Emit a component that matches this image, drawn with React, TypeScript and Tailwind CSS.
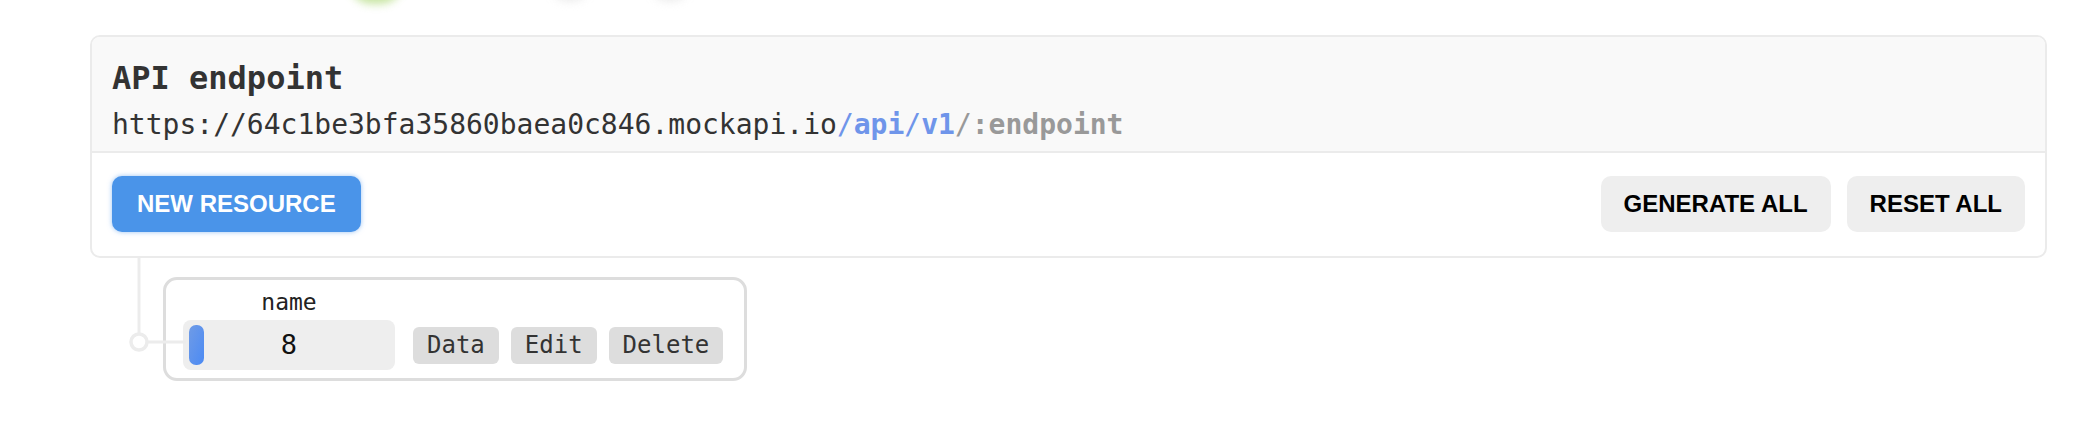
import React from "react";

const mono = { fontFamily: '"DejaVu Sans Mono", "Liberation Mono", monospace' };
const sans = { fontFamily: '"Liberation Sans", Arial, sans-serif' };

export default function App() {
  return (
    <div className="relative w-full h-[446px] bg-white overflow-hidden">
      {/* faint decorations cut off at top */}
      <div className="absolute left-[348px] top-[-44px] w-[56px] h-[48px] rounded-full bg-[#b9de8a] blur-[4px] opacity-80" />
      <div className="absolute left-[548px] top-[-46px] w-[44px] h-[48px] rounded-full bg-[#e4e4e4] blur-[4px] opacity-70" />
      <div className="absolute left-[648px] top-[-46px] w-[44px] h-[48px] rounded-full bg-[#e4e4e4] blur-[4px] opacity-70" />

      <div className="pt-[35px] pl-[90px]">
        <div className="w-[1957px] border-2 border-[#ebebeb] rounded-[10px] overflow-hidden bg-white">
          <div className="bg-[#f9f9f9] px-[20px] pt-[22px] pb-[9px] border-b-2 border-[#ebebeb]">
            <div className="text-[32px] leading-[38px] font-bold text-[#333]" style={mono}>
              API endpoint
            </div>
            <div className="mt-[11px] text-[28px] leading-[34px] text-[#333]" style={mono}>
              <span>https://64c1be3bfa35860baea0c846.mockapi.io</span>
              <span className="text-[#6f95ea]">/</span>
              <span className="text-[#6f95ea] font-bold">api</span>
              <span className="text-[#6f95ea]">/</span>
              <span className="text-[#6f95ea] font-bold">v1</span>
              <span className="text-[#999]">/</span>
              <span className="text-[#999] font-bold">:endpoint</span>
            </div>
          </div>
          <div className="flex items-center justify-between px-[20px] pt-[23px] pb-[24px]">
            <button
              className="h-[56px] px-[25px] rounded-[10px] bg-[#4a94e9] text-white text-[24px] font-bold shadow-[0_0_5px_rgba(74,148,233,0.55)]"
              style={sans}
            >
              NEW RESOURCE
            </button>
            <div className="flex gap-[16px]">
              <button className="h-[56px] px-[23px] rounded-[10px] bg-[#eeeeee] text-black text-[24px] font-bold" style={sans}>
                GENERATE ALL
              </button>
              <button className="h-[56px] px-[23px] rounded-[10px] bg-[#eeeeee] text-black text-[24px] font-bold" style={sans}>
                RESET ALL
              </button>
            </div>
          </div>
        </div>
      </div>

      {/* resource tree */}
      <div className="relative">
        <svg className="absolute left-0 top-0" width="200" height="130" viewBox="0 0 200 130">
          <line x1="139" y1="0" x2="139" y2="75" stroke="#ececec" strokeWidth="3" />
          <circle cx="139" cy="84" r="8" fill="white" stroke="#ececec" strokeWidth="3.5" />
        </svg>
        <div className="pl-[163px] pt-[19px]">
          <div className="relative inline-flex items-end border-[3px] border-[#dddddd] rounded-[14px] pl-[17px] pr-[21px] pt-[8px] pb-[8px] bg-white">
            <div className="flex flex-col items-center">
              <div className="text-[23px] leading-[28px] text-[#222]" style={mono}>name</div>
              <div className="relative mt-[4px] w-[212px] h-[50px] rounded-[8px] bg-[#eeeeee] flex items-center justify-center">
                <div className="absolute left-[6px] top-[5px] w-[15px] h-[40px] rounded-[7px] bg-gradient-to-br from-[#6f9be6] to-[#4b8af4]" />
                <span className="text-[27px] text-[#111]" style={mono}>8</span>
              </div>
            </div>
            <div className="flex items-center gap-[12px] ml-[18px] mb-[6px]">
              <span className="h-[37px] px-[14px] rounded-[6px] bg-[#dddddd] text-[24px] leading-[37px] text-[#333]" style={mono}>Data</span>
              <span className="h-[37px] px-[14px] rounded-[6px] bg-[#dddddd] text-[24px] leading-[37px] text-[#333]" style={mono}>Edit</span>
              <span className="h-[37px] px-[14px] rounded-[6px] bg-[#dddddd] text-[24px] leading-[37px] text-[#333]" style={mono}>Delete</span>
            </div>
          </div>
        </div>
        <svg className="absolute left-0 top-0 pointer-events-none" width="200" height="130" viewBox="0 0 200 130">
          <line x1="147" y1="84" x2="186" y2="84" stroke="#ececec" strokeWidth="3" />
        </svg>
      </div>
    </div>
  );
}
